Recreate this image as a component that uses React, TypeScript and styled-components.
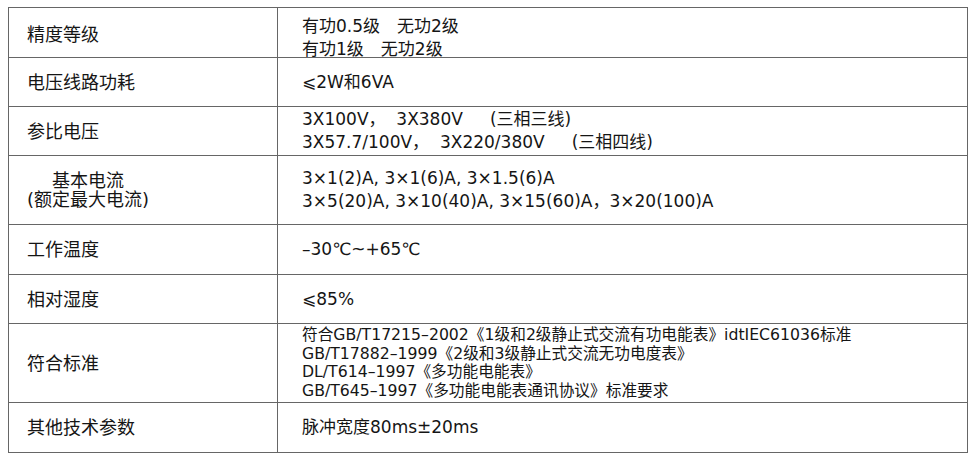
import React from 'react'
import styled, { createGlobalStyle } from 'styled-components'

const LINE = '#666666'

const GlobalStyle = createGlobalStyle`
  body {
    margin: 0;
    background: #ffffff;
    font-family: "DejaVu Sans", "Noto Sans CJK SC", sans-serif;
    color: #151515;
  }
`

const Page = styled.div`
  padding: 7px 0 0 8px;
`

const Table = styled.div`
  width: 960px;
  box-sizing: border-box;
  border: 1px solid ${LINE};
  border-bottom: none;
`

const Row = styled.div<{ $h: number }>`
  display: grid;
  grid-template-columns: 269px 1fr;
  height: ${p => p.$h}px;
  box-sizing: border-box;
  border-bottom: 1px solid ${LINE};
`

const Label = styled.div`
  display: flex;
  align-items: center;
  padding-left: 18px;
  border-right: 1px solid ${LINE};
  font-size: 18px;
  line-height: 19px;
`

const LabelStack = styled.span`
  display: inline-block;
  text-align: center;
`

const Value = styled.div<{ $small?: boolean; $drop?: number }>`
  display: flex;
  flex-direction: column;
  justify-content: center;
  padding-left: 24px;
  padding-top: ${p => p.$drop ?? 0}px;
  font-size: ${p => (p.$small ? 15.7 : 17)}px;
  line-height: ${p => (p.$small ? 18.5 : 23)}px;
  white-space: pre;
`

const Line = styled.div``

interface ISpec {
  label: string[]
  values: string[]
  height: number
  small?: boolean
  drop?: number
}

const specs: ISpec[] = [
  { label: ['精度等级'], values: ['有功0.5级\u3000无功2级', '有功1级\u3000无功2级'], height: 50, drop: 7 },
  { label: ['电压线路功耗'], values: ['⩽2W和6VA'], height: 49 },
  {
    label: ['参比电压'],
    values: ['3X100V，  3X380V     (三相三线)', '3X57.7/100V，  3X220/380V     (三相四线)'],
    height: 49,
  },
  {
    label: ['基本电流', '(额定最大电流)'],
    values: ['3×1(2)A, 3×1(6)A, 3×1.5(6)A', '3×5(20)A, 3×10(40)A, 3×15(60)A，3×20(100)A'],
    height: 69,
  },
  { label: ['工作温度'], values: ['–30℃~+65℃'], height: 50 },
  { label: ['相对湿度'], values: ['⩽85%'], height: 49 },
  {
    label: ['符合标准'],
    values: [
      '符合GB/T17215–2002《1级和2级静止式交流有功电能表》idtIEC61036标准',
      'GB/T17882–1999《2级和3级静止式交流无功电度表》',
      'DL/T614–1997《多功能电能表》',
      'GB/T645–1997《多功能电能表通讯协议》标准要求',
    ],
    height: 79,
    small: true,
  },
  { label: ['其他技术参数'], values: ['脉冲宽度80ms±20ms'], height: 50 },
]

export default function App() {
  return (
    <Page>
      <GlobalStyle />
      <Table>
        {specs.map(spec => (
          <Row key={spec.label.join('')} $h={spec.height}>
            <Label>
              <LabelStack>
                {spec.label.map(l => (
                  <Line key={l}>{l}</Line>
                ))}
              </LabelStack>
            </Label>
            <Value $small={spec.small} $drop={spec.drop}>
              {spec.values.map(v => (
                <Line key={v}>{v}</Line>
              ))}
            </Value>
          </Row>
        ))}
      </Table>
    </Page>
  )
}
